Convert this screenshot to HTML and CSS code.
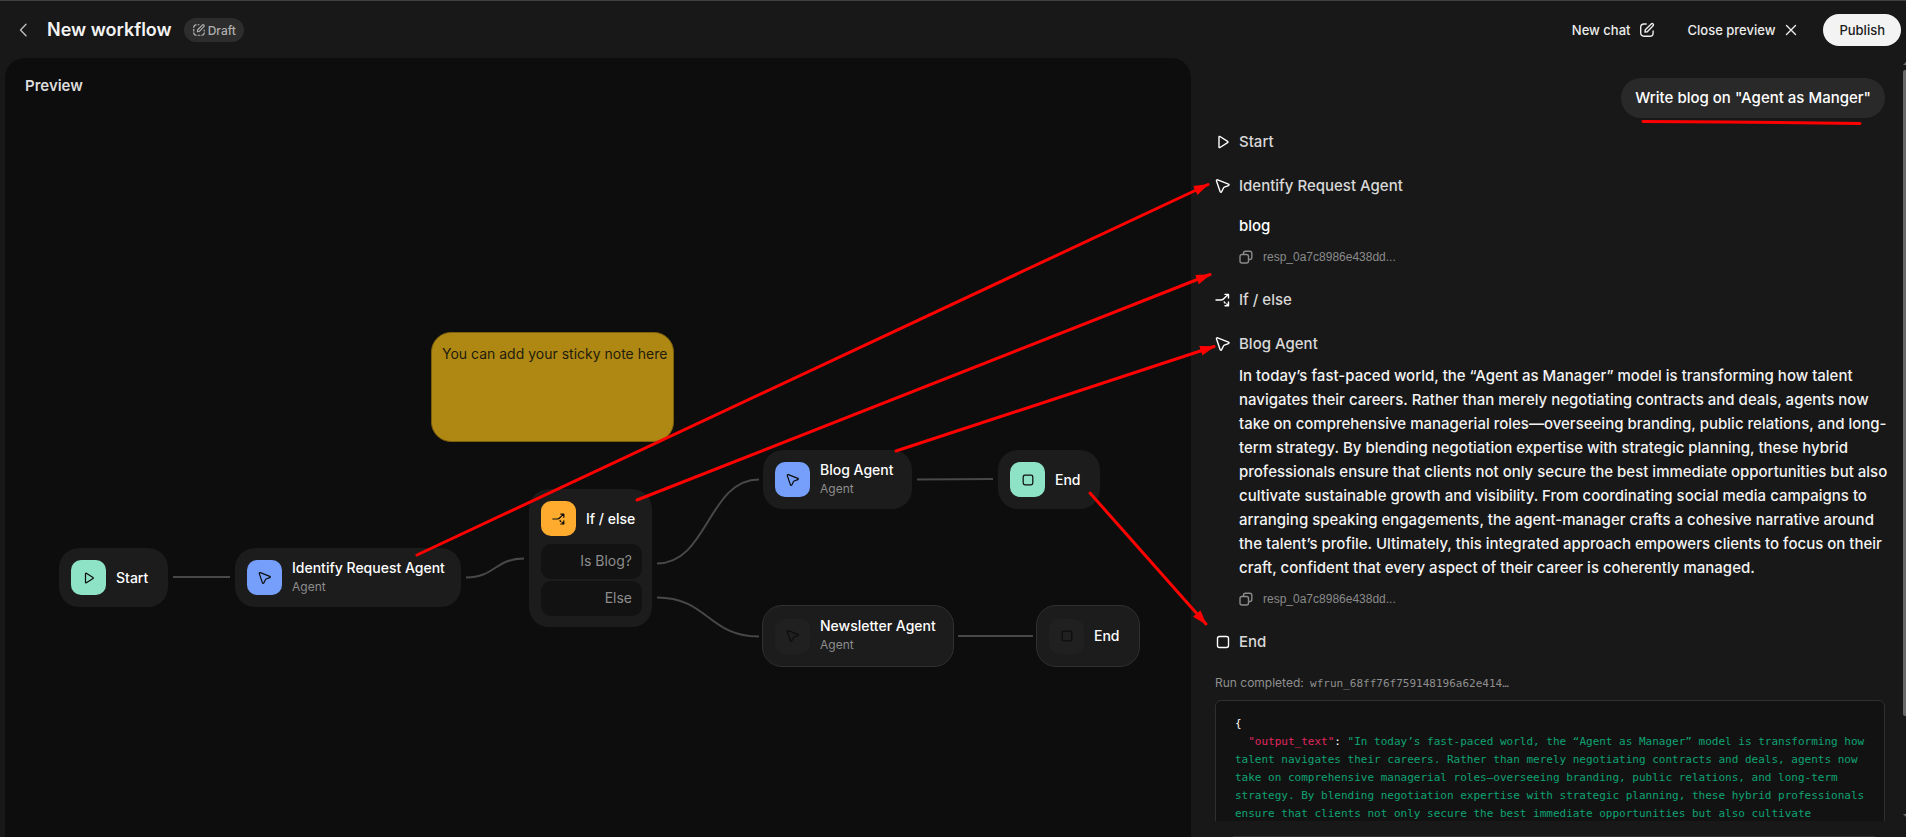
FILE: index.html
```html
<!DOCTYPE html>
<html lang="en">
<head>
<meta charset="utf-8">
<title>New workflow</title>
<link rel="stylesheet" href="styles.css">
</head>
<body>
<svg class="defs" aria-hidden="true">
  <symbol id="i-play" viewBox="0 0 16 16"><path d="M4 3.100v9.800c0 .6.5.9 1 .6l7.600-4.900c.5-.3.5-.9 0-1.200L5 2.500c-.5-.3-1 0-1 .6z"/></symbol>
  <symbol id="i-agent" viewBox="0 0 16 16"><path d="M1.500 3l3.600 10.600c.3.800 1.200.800 1.500.1l2-4c.1-.3.4-.5.7-.6l4.200-1.500c.8-.3.8-1.200 0-1.500L2.700 1.800C1.900 1.500 1.200 2.200 1.500 3z"/></symbol>
  <symbol id="i-split" viewBox="0 0 16 16"><path d="M1 8h5c2.200 0 3-1.500 4.200-2.700L13 2.700M10 2.400h3.500v3.700M9.200 10l.9.900M11.800 12l1.500 1.500M10 13.700h3.500V10"/></symbol>
  <symbol id="i-stop" viewBox="0 0 16 16"><rect x="2.500" y="2.500" width="11" height="11" rx="2"/></symbol>
  <symbol id="i-copy" viewBox="0 0 16 16"><rect x="2" y="5.500" width="8.500" height="8.500" rx="2"/><path d="M5.500 5.300V4.200C5.500 3 6.300 2.200 7.500 2.200h4.300c1.200 0 2 .8 2 2v4.300c0 1.200-.8 2-2 2h-1"/></symbol>
  <symbol id="i-edit" viewBox="0 0 16 16"><path d="M7.200 2H5C3 2 1.700 3.300 1.700 5.200v5.600C1.700 12.800 3 14.200 5 14.200h5.800c2 0 3.300-1.400 3.300-3.300V9M6 10.100l.3-2.300 5.900-5.900c.6-.6 1.400-.5 1.900 0s.6 1.300 0 1.900L8.300 9.700z"/></symbol>
  <symbol id="i-draft" viewBox="0 0 16 16"><path d="M8 2H7M4.700 2.100C3 2.300 2.100 3.200 2 5M2 7.200v2M2 11.200c.1 1.800 1 2.700 2.800 2.800M7 14h2M11.200 14c1.800-.1 2.700-1 2.800-2.800M14 9V8M6.200 10l.3-2.300 5.300-5.300c.6-.6 1.300-.5 1.800 0s.6 1.200 0 1.800L8.400 9.500z"/></symbol>
</svg>

<header class="topbar">
  <div class="title-group">
    <button class="back" aria-label="Back"><svg viewBox="0 0 16 16"><path d="M11 2.300L5.500 8l5.500 5.700"/></svg></button>
    <h1>New workflow</h1>
    <span class="badge"><svg><use href="#i-draft"/></svg>Draft</span>
  </div>
  <div class="actions">
    <button class="ghost">New chat<svg><use href="#i-edit"/></svg></button>
    <button class="ghost">Close preview<svg viewBox="0 0 16 16"><path d="M3.500 3.500l9 9M12.500 3.500l-9 9"/></svg></button>
    <button class="publish">Publish</button>
  </div>
</header>

<main class="workspace">
  <section class="canvas" aria-label="Workflow canvas">
    <h2>Preview</h2>
    <svg class="edges" aria-hidden="true">
      <path d="M168 519H225"/>
      <path d="M461 519.500C490 519.500 490 500.500 519 500.500"/>
      <path d="M652 505.500C703 505.500 703 421.500 754 421.500"/>
      <path d="M652 539.500C703 539.500 703 578.500 754 578.500"/>
      <path d="M912 421.500L988 421"/>
      <path d="M953 578H1028"/>
    </svg>
    <div class="sticky">You can add your sticky note here</div>
    <div class="node n-start"><span class="tile green"><svg><use href="#i-play"/></svg></span><b>Start</b></div>
    <div class="node n-identify"><span class="tile blue"><svg><use href="#i-agent"/></svg></span><div><b>Identify Request Agent</b><small>Agent</small></div></div>
    <div class="node n-if">
      <div class="node-head"><span class="tile orange"><svg><use href="#i-split"/></svg></span><b>If / else</b></div>
      <div class="branches"><span>Is Blog?</span><span>Else</span></div>
    </div>
    <div class="node n-blog"><span class="tile blue"><svg><use href="#i-agent"/></svg></span><div><b>Blog Agent</b><small>Agent</small></div></div>
    <div class="node n-end"><span class="tile green"><svg><use href="#i-stop"/></svg></span><b>End</b></div>
    <div class="node idle n-news"><span class="tile"><svg><use href="#i-agent"/></svg></span><div><b>Newsletter Agent</b><small>Agent</small></div></div>
    <div class="node idle n-end2"><span class="tile"><svg><use href="#i-stop"/></svg></span><b>End</b></div>
  </section>

  <section class="chat" aria-label="Chat preview">
    <div class="log">
      <p class="bubble">Write blog on "Agent as Manger"</p>
      <h3 class="step first"><svg><use href="#i-play"/></svg>Start</h3>
      <h3 class="step"><svg><use href="#i-agent"/></svg>Identify Request Agent</h3>
      <p class="reply short">blog</p>
      <button class="resp"><svg><use href="#i-copy"/></svg>resp_0a7c8986e438dd...</button>
      <h3 class="step after"><svg><use href="#i-split"/></svg>If / else</h3>
      <h3 class="step"><svg><use href="#i-agent"/></svg>Blog Agent</h3>
      <p class="reply">In today’s fast-paced world, the “Agent as Manager” model is transforming how talent<br>
      navigates their careers. Rather than merely negotiating contracts and deals, agents now<br>
      take on comprehensive managerial roles—overseeing branding, public relations, and long-<br>
      term strategy. By blending negotiation expertise with strategic planning, these hybrid<br>
      professionals ensure that clients not only secure the best immediate opportunities but also<br>
      cultivate sustainable growth and visibility. From coordinating social media campaigns to<br>
      arranging speaking engagements, the agent-manager crafts a cohesive narrative around<br>
      the talent’s profile. Ultimately, this integrated approach empowers clients to focus on their<br>
      craft, confident that every aspect of their career is coherently managed.</p>
      <button class="resp"><svg><use href="#i-copy"/></svg>resp_0a7c8986e438dd...</button>
      <h3 class="step after"><svg><use href="#i-stop"/></svg>End</h3>
      <p class="run">Run completed: <code>wfrun_68ff76f759148196a62e414…</code></p>
      <pre class="output">{
  <span class="key">"output_text"</span>: <span class="str">"In today’s fast-paced world, the “Agent as Manager” model is transforming how</span>
<span class="str">talent navigates their careers. Rather than merely negotiating contracts and deals, agents now</span>
<span class="str">take on comprehensive managerial roles—overseeing branding, public relations, and long-term</span>
<span class="str">strategy. By blending negotiation expertise with strategic planning, these hybrid professionals</span>
<span class="str">ensure that clients not only secure the best immediate opportunities but also cultivate</span>
</pre>
    </div>
    <div class="composer"></div>
    <div class="scrollbar"></div>
  </section>
</main>

<svg class="annotations" aria-hidden="true">
  <defs><marker id="head" markerUnits="userSpaceOnUse" markerWidth="16" markerHeight="10" refX="14" refY="5" orient="auto"><path d="M0 0L15 5L0 10z"/></marker></defs>
  <path d="M417 555L1208 184.500" marker-end="url(#head)"/>
  <path d="M637 500L1210 274.500" marker-end="url(#head)"/>
  <path d="M896 451L1214 346.500" marker-end="url(#head)"/>
  <path d="M1090 493L1206 624" marker-end="url(#head)"/>
  <path class="underline" d="M1643 121.500L1725 122L1860 123.500"/>
</svg>
</body>
</html>
```
FILE: styles.css
```css
* { box-sizing: border-box; }
body {
  margin: 0;
  height: 100vh;
  display: flex;
  flex-direction: column;
  overflow: hidden;
  position: relative;
  background: #181818;
  border-top: 1px solid #414141;
  color: #f3f3f3;
  font-family: Inter, "Liberation Sans", sans-serif;
  font-size: 15px;
  font-weight: 500;
}
h1, h2, h3, p, pre { margin: 0; }
button { font: inherit; color: inherit; background: none; border: 0; padding: 0; }
svg { width: 16px; height: 16px; fill: none; stroke: currentColor; stroke-width: 1.4; stroke-linecap: round; stroke-linejoin: round; flex: none; }
.defs { position: absolute; width: 0; height: 0; }

.topbar { height: 58px; flex: none; display: flex; justify-content: space-between; align-items: center; padding: 0 5px 0 15px; }
.title-group, .actions { display: flex; align-items: center; }
.back { display: flex; margin-right: 16px; color: #bdbdbd; }
h1 { font-size: 18px; line-height: 28px; font-weight: 600; }
.badge { display: flex; align-items: center; gap: 2px; height: 24px; margin-left: 12px; padding: 0 8px; border-radius: 12px; background: #2d2d2d; color: #afafaf; font-size: 12px; }
.badge svg { width: 14px; height: 14px; }
.ghost { display: flex; align-items: center; gap: 8px; margin-right: 33px; font-size: 13px; color: #ececec; }
.ghost + .ghost { margin-right: 24px; }
.publish { height: 32px; padding: 0 16px; border-radius: 16px; background: #f3f3f3; color: #1b1b1b; font-size: 13px; }

.workspace { flex: 1; min-height: 0; display: grid; grid-template: minmax(0, 1fr) / minmax(0, 1186fr) minmax(0, 715fr); padding-left: 5px; margin-top: -1px; }
.canvas { position: relative; overflow: hidden; background: #0d0d0d; border-radius: 20px 20px 0 0; padding: 16px 20px; }
h2 { font-size: 15px; line-height: 24px; font-weight: 600; color: #dcdcdc; }
.edges { position: absolute; inset: 0; width: 100%; height: 100%; color: #484848; stroke-width: 2; stroke-linecap: butt; }

.sticky { position: absolute; left: 426px; top: 274px; width: 243px; height: 110px; padding: 11px 10px; border: 1px solid #7c600e; border-radius: 20px; background: #af8814; color: #221c0c; font-size: 14px; line-height: 20px; font-weight: 400; white-space: nowrap; }
.node { position: absolute; display: flex; align-items: center; gap: 10px; height: 59px; padding: 0 12px; border-radius: 20px; background: #1c1c1c; font-size: 14px; white-space: nowrap; }
.node b { display: block; font-weight: 500; line-height: 16px; color: #fff; }
.node small { display: block; margin-top: 2px; font-size: 12px; font-weight: 400; line-height: 18px; color: #8c8c8c; }
.tile { display: grid; place-items: center; width: 35px; height: 35px; border-radius: 10px; background: #202020; color: #0d0d0d; }
.tile svg { width: 14px; height: 14px; }
.green { background: #8ee3c6; }
.blue { background: #759ffa; }
.orange { background: #ffab2d; }
.n-start { left: 54px; top: 490px; width: 109px; }
.n-identify { left: 230px; top: 490px; width: 226px; }
.n-if { left: 524px; top: 431px; width: 123px; height: 138px; padding: 12px 10px 12px 12px; display: block; }
.n-blog { left: 758px; top: 392px; width: 149px; }
.n-end { left: 993px; top: 392px; width: 102px; }
.n-news { left: 757px; top: 547px; width: 192px; }
.n-end2 { left: 1031px; top: 547px; width: 104px; }
.idle { height: 62px; border: 1px solid #303030; }
.node-head { display: flex; align-items: center; gap: 10px; }
.branches { display: grid; gap: 2px; margin-top: 8px; }
.branches span { height: 35px; padding-right: 10px; border-radius: 10px; background: #121212; color: #8c8c8c; font-weight: 400; line-height: 34px; text-align: right; }

.chat { position: relative; min-width: 0; display: flex; flex-direction: column; }
.log { flex: 1; min-height: 0; overflow: hidden; display: flex; flex-direction: column; padding: 20px 21px 0 24px; }
.log > * { flex: none; }
.bubble { align-self: flex-end; padding: 8px 14px; border-radius: 20px; background: #292929; line-height: 24px; font-weight: 450; color: #fff; }
.step { display: flex; align-items: center; gap: 8px; margin-top: 20px; font-size: 15px; line-height: 24px; font-weight: 500; color: #d8d8d8; }
.step svg { color: #fff; }
.step.first { margin-top: 12px; }
.step.after { margin-top: 23px; }
.reply { margin: 8px 0 0 24px; line-height: 24px; font-weight: 450; white-space: nowrap; color: #f3f3f3; }
.reply.short { margin-top: 16px; font-weight: 500; color: #fff; }
.resp { align-self: flex-start; display: flex; align-items: center; gap: 9px; margin: 11px 0 0 23px; font: 12px/16px "Liberation Sans", Arial, sans-serif; color: #8a8a8a; }
.run { margin-top: 21px; font-size: 12px; line-height: 16px; font-weight: 400; color: #8f8f8f; }
.run code { margin-left: 3px; font: 11px/16px "DejaVu Sans Mono", monospace; }
.output { padding: 14px 19px; border: 1px solid #303030; border-radius: 6px; margin-top: 8px; background: #121212; color: #fff; font: 11px/18px "DejaVu Sans Mono", monospace; }
.key { color: #e0265f; }
.str { color: #0fa373; }
.composer { flex: none; height: 16px; margin: 0 31px 0 42px; border-bottom: 1px solid #303030; }
.scrollbar { position: absolute; right: 0; top: 12px; bottom: 121px; width: 3px; border-radius: 2px 0 0 2px; background: #686868; }
.scrollbar::before, .scrollbar::after { content: ""; position: absolute; right: 0; border-left: 3px solid transparent; }
.scrollbar::before { top: -8px; border-bottom: 3px solid #686868; }
.scrollbar::after { bottom: -101px; border-top: 3px solid #686868; }

.annotations { position: absolute; left: 0; top: -1px; width: 100%; height: 100vh; pointer-events: none; color: #f00; stroke-width: 3; }
.annotations marker path { fill: #f00; stroke: none; }
```
